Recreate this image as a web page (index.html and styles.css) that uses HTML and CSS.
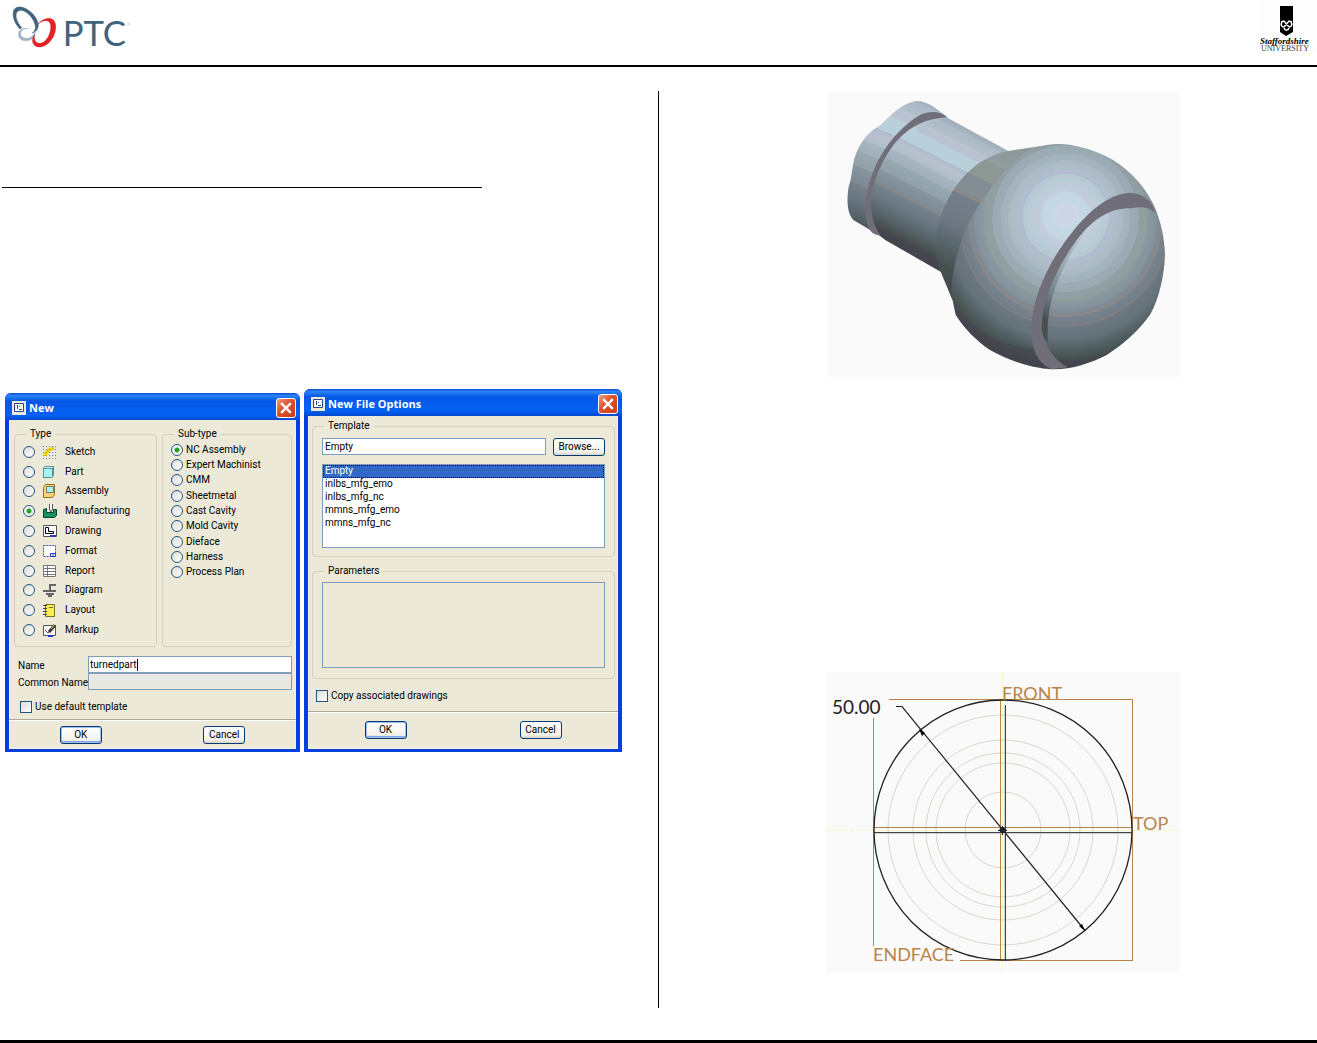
FILE: index.html
```html
<!DOCTYPE html>
<html lang="en">
<head>
<meta charset="utf-8">
<title>Turned part manufacturing</title>
<link rel="stylesheet" href="styles.css">
</head>
<body>
<header class="page-header">
  <svg class="logo-ptc" viewBox="0 0 420 195" role="img" aria-label="PTC">
    <path fill="#41637b" stroke="#41637b" stroke-width="2" fill-rule="evenodd" d="M97 99C128 88 114 52 88 33C67 16 43 17 40 36C37 54 48 75 60 87L65 83C51 68 43 47 51 36C60 25 78 31 93 50C108 70 112 89 97 99Z"/>
    <path fill="#9fb6ca" stroke="#9fb6ca" fill-rule="evenodd" d="M88 86C70 80 54 91 55 104C56 119 71 126 88 121C101 117 107 105 106 94C101 106 91 116 79 115C67 113 59 106 63 96C66 89 76 84 88 86Z"/>
    <path fill="#e02126" stroke="#e02126" fill-rule="evenodd" d="M113 73C128 55 149 49 160 60C174 73 167 105 151 124C136 142 112 147 102 134C94 124 98 110 104 103C101 119 107 131 121 130C136 128 148 110 151 91C155 73 149 62 138 62C128 62 120 67 113 73Z"/>
    <text x="188" y="137" class="ptc-word">PTC</text>
    <circle cx="386" cy="72" r="3" fill="none" stroke="#7d95a5"/>
  </svg>
  <svg class="logo-staffs" viewBox="0 0 70 65" role="img" aria-label="Staffordshire University">
    <path fill="#fdfdfd" d="M13 0h57v52H13z"/>
    <path d="M33 6h13v26l-7 4-6-4z"/>
    <path fill="none" stroke="#fff" stroke-width="1.500" d="M34 22l3-1 5 6M45 22l-3-1-5 6M35 22c-2 3 0 5 2 5M44 22c2 3 0 5-2 5M37 28c1 3 4 3 5 0"/>
    <text x="13" y="44" class="staffs-name">Staffordshire</text>
    <text x="14" y="51" class="staffs-sub">UNIVERSITY</text>
  </svg>
</header>

<main class="columns">
  <section class="column column-left">
    <hr class="rule">
    <div class="dialogs">
      <form class="dialog dialog-new">
        <div class="titlebar">
          <svg class="app-icon" viewBox="0 0 14 14"><path fill="#ece9d8" d="M0 0h14v14H0z"/><path fill="#fff" stroke="#27458c" d="M2.500 2.500h9v8h-9z"/><path stroke="#27458c" d="M5.500 4v4M7 5.500h1M7 8.500h3"/></svg>
          <h2>New</h2>
          <button type="button" class="close" aria-label="Close"><svg viewBox="0 0 10 10"><path d="M1 1l8 8M9 1L1 9"/></svg></button>
        </div>
        <div class="dialog-body">
          <div class="groups">
            <fieldset>
              <legend>Type</legend>
              <div class="type-list">
                <label><input type="radio" name="type"><svg viewBox="0 0 16 14"><path stroke="#6684c8" stroke-dasharray="1 2" d="M1 1.500h14M1 4.500h14M1 7.500h14M1 10.500h14M1 13.500h14"/><path fill="none" stroke="#e8c800" stroke-width="3" d="M3 11C4 6 7 4 12 3"/></svg>Sketch</label>
                <label><input type="radio" name="type"><svg viewBox="0 0 16 14"><path fill="#5a8f94" d="M1 3l2-2h9v9l-2 3H1z"/><path fill="#a5f3f5" d="M2 4h8v8H2z"/><path fill="#d9ffff" d="M3 2h8l-1 1H2z"/></svg>Part</label>
                <label><input type="radio" name="type"><svg viewBox="0 0 16 14"><path fill="#f7d56b" stroke="#94701c" d="M1.500 3.500l2-3h9v10l-2 3h-9z"/><path fill="#a5f3f5" stroke="#777" d="M4.500 2.500h7v6h-7z"/></svg>Assembly</label>
                <label><input type="radio" name="type" checked><svg viewBox="0 0 16 14"><path fill="#169260" stroke="#0a4430" d="M1.500 5.500l3-1v4h7v-3h3v6l-2 2h-11z"/><path fill="#fff" stroke="#555" d="M7.500 0v5l1.500 3 1.500-3V0"/></svg>Manufacturing</label>
                <label><input type="radio" name="type"><svg viewBox="0 0 16 14"><path fill="#fff" stroke="#555" d="M1.500 1.500h13v11h-13z"/><path fill="none" stroke="#000" d="M3.500 3.500h3v4h5v2h-8z"/><path stroke="#2338c8" stroke-width="2" d="M8 12h6"/></svg>Drawing</label>
                <label><input type="radio" name="type"><svg viewBox="0 0 16 14"><path fill="#fff" stroke="#444cbb" stroke-dasharray="2 1" d="M1.500 1.500h12v11h-12z"/><path fill="#fff" stroke="#2338c8" d="M8.500 9.500h5v3h-5zM11 10v3"/></svg>Format</label>
                <label><input type="radio" name="type"><svg viewBox="0 0 16 14"><path fill="#fff" stroke="#777" d="M1.500 1.500h12v11h-12z"/><path stroke="#777" d="M2 4.500h11M2 7.500h11M2 10.500h11M5.500 2v10"/></svg>Report</label>
                <label><input type="radio" name="type"><svg viewBox="0 0 16 14"><path fill="none" stroke="#666" stroke-width="2" d="M14 2H8v6M1 8h13M4 11h8M6 13h4"/></svg>Diagram</label>
                <label><input type="radio" name="type"><svg viewBox="0 0 16 14"><path fill="#f8ee54" stroke="#77701d" d="M3.500 1.500h9v12h-9z"/><path stroke="#444" d="M1 2.500h4M1 5.500h4M1 8.500h4M1 11.500h4"/><path stroke="#6c6c40" d="M7 4.500h4"/></svg>Layout</label>
                <label><input type="radio" name="type"><svg viewBox="0 0 16 14"><path fill="#fff" stroke="#555" d="M1.500 2.500h12v10h-12z"/><path fill="none" stroke="#c02626" d="M3 7l3 3 3-3"/><path stroke="#333" stroke-width="3" d="M7 9l6-7"/><path stroke="#e8d45a" d="M9 6l4-5"/><path stroke="#2338c8" stroke-width="2" d="M6 13h5"/></svg>Markup</label>
              </div>
            </fieldset>
            <fieldset>
              <legend>Sub-type</legend>
              <div class="subtype-list">
                <label><input type="radio" name="subtype" checked>NC Assembly</label>
                <label><input type="radio" name="subtype">Expert Machinist</label>
                <label><input type="radio" name="subtype">CMM</label>
                <label><input type="radio" name="subtype">Sheetmetal</label>
                <label><input type="radio" name="subtype">Cast Cavity</label>
                <label><input type="radio" name="subtype">Mold Cavity</label>
                <label><input type="radio" name="subtype">Dieface</label>
                <label><input type="radio" name="subtype">Harness</label>
                <label><input type="radio" name="subtype">Process Plan</label>
              </div>
            </fieldset>
          </div>
          <div class="names">
            <label for="part-name">Name</label>
            <div class="name-box"><input id="part-name" type="text" value="turnedpart"><span class="caret"></span></div>
            <label for="common-name">Common Name</label>
            <input id="common-name" class="field" type="text" disabled>
          </div>
          <label class="check"><input type="checkbox">Use default template</label>
        </div>
        <div class="actions">
          <button type="button" class="btn btn-default">OK</button>
          <button type="button" class="btn">Cancel</button>
        </div>
      </form>

      <form class="dialog dialog-options">
        <div class="titlebar">
          <svg class="app-icon" viewBox="0 0 14 14"><path fill="#ece9d8" d="M0 0h14v14H0z"/><path fill="#fff" stroke="#27458c" d="M2.500 2.500h9v8h-9z"/><path stroke="#27458c" d="M5.500 4v4M7 5.500h1M7 8.500h3"/></svg>
          <h2>New File Options</h2>
          <button type="button" class="close" aria-label="Close"><svg viewBox="0 0 10 10"><path d="M1 1l8 8M9 1L1 9"/></svg></button>
        </div>
        <div class="dialog-body">
          <fieldset>
            <legend>Template</legend>
            <div class="template-row">
              <input class="field" type="text" value="Empty" aria-label="Template">
              <button type="button" class="btn">Browse...</button>
            </div>
            <select class="template-list" size="5" aria-label="Templates">
              <option selected>Empty</option>
              <option>inlbs_mfg_emo</option>
              <option>inlbs_mfg_nc</option>
              <option>mmns_mfg_emo</option>
              <option>mmns_mfg_nc</option>
            </select>
          </fieldset>
          <fieldset>
            <legend>Parameters</legend>
            <div class="parameters"></div>
          </fieldset>
          <label class="check"><input type="checkbox">Copy associated drawings</label>
        </div>
        <div class="actions">
          <button type="button" class="btn btn-default">OK</button>
          <button type="button" class="btn">Cancel</button>
        </div>
      </form>
    </div>
  </section>

  <section class="column column-right">
    <svg class="model" viewBox="21 18 1059 858" role="img" aria-label="Turned part model">
      <defs>
        <linearGradient id="neck" gradientUnits="userSpaceOnUse" x1="440" y1="120" x2="255" y2="452">
          <stop offset="0" stop-color="#7f8b92"/><stop offset=".06" stop-color="#8f9da4"/>
          <stop offset=".06" stop-color="#9eacb6"/><stop offset=".12" stop-color="#a5b2bf"/>
          <stop offset=".12" stop-color="#acbac8"/><stop offset=".19" stop-color="#b0bfc9"/>
          <stop offset=".19" stop-color="#b9c2d0"/><stop offset=".25" stop-color="#b9c2d0"/>
          <stop offset=".25" stop-color="#b9cfd9"/><stop offset=".34" stop-color="#b9cfd9"/>
          <stop offset=".34" stop-color="#aebbd0"/><stop offset=".38" stop-color="#b8c2cd"/>
          <stop offset=".43" stop-color="#b0bdca"/><stop offset=".43" stop-color="#a6b7c1"/>
          <stop offset=".5" stop-color="#a0aebb"/><stop offset=".5" stop-color="#97a8ae"/>
          <stop offset=".58" stop-color="#92a0aa"/><stop offset=".58" stop-color="#88969e"/>
          <stop offset=".66" stop-color="#7d8b96"/><stop offset=".67" stop-color="#8b8785"/>
          <stop offset=".68" stop-color="#74808a"/><stop offset=".76" stop-color="#69757f"/>
          <stop offset=".84" stop-color="#56636a"/><stop offset=".91" stop-color="#46514f"/>
          <stop offset=".93" stop-color="#46464f"/><stop offset="1" stop-color="#43434d"/>
        </linearGradient>
        <linearGradient id="neck-side" href="#neck" x1="450" y1="90" x2="240" y2="500"/>
        <linearGradient id="cap" href="#neck" x1="330" y1="0" x2="125" y2="490"/>
        <linearGradient id="shoulder" gradientUnits="userSpaceOnUse" x1="590" y1="190" x2="380" y2="620">
          <stop offset="0" stop-color="#8a9698"/><stop offset=".15" stop-color="#929d9c"/>
          <stop offset=".15" stop-color="#8d9894"/><stop offset=".27" stop-color="#8d9894"/>
          <stop offset=".27" stop-color="#828d94"/><stop offset=".39" stop-color="#828d94"/>
          <stop offset=".39" stop-color="#8b8785"/><stop offset=".41" stop-color="#8b8785"/>
          <stop offset=".41" stop-color="#747f8a"/><stop offset=".6" stop-color="#6d7882"/>
          <stop offset=".72" stop-color="#59656d"/><stop offset=".86" stop-color="#46514f"/>
          <stop offset="1" stop-color="#43474d"/>
        </linearGradient>
        <linearGradient id="step" gradientUnits="userSpaceOnUse" x1="780" y1="450" x2="670" y2="750">
          <stop offset="0" stop-color="#b4c4cf"/><stop offset=".3" stop-color="#9caab4"/>
          <stop offset=".6" stop-color="#76828c"/><stop offset=".85" stop-color="#46514f"/>
        </linearGradient>
        <radialGradient id="ball" gradientUnits="userSpaceOnUse" cx="735" cy="413" r="430" fx="738" fy="388">
          <stop offset="0" stop-color="#ccd5e9"/><stop offset=".09" stop-color="#cdd7e5"/>
          <stop offset=".09" stop-color="#c4d9e4"/><stop offset=".17" stop-color="#c4d6e1"/>
          <stop offset=".17" stop-color="#c3cddb"/><stop offset=".24" stop-color="#bdcbd9"/>
          <stop offset=".24" stop-color="#b9ced8"/><stop offset=".3" stop-color="#b6c8d2"/>
          <stop offset=".3" stop-color="#aebbd0"/><stop offset=".33" stop-color="#b3bdcf"/>
          <stop offset=".33" stop-color="#afbfca"/><stop offset=".4" stop-color="#abb9c5"/>
          <stop offset=".4" stop-color="#a2b6bc"/><stop offset=".45" stop-color="#a4b1bf"/>
          <stop offset=".45" stop-color="#9dabb7"/><stop offset=".51" stop-color="#9aaab0"/>
          <stop offset=".51" stop-color="#919fa7"/><stop offset=".57" stop-color="#929e9d"/>
          <stop offset=".57" stop-color="#899aa0"/><stop offset=".63" stop-color="#85929c"/>
          <stop offset=".65" stop-color="#7d8993"/><stop offset=".67" stop-color="#8d8988"/>
          <stop offset=".68" stop-color="#77838e"/><stop offset=".73" stop-color="#727d87"/>
          <stop offset=".735" stop-color="#85817f"/><stop offset=".745" stop-color="#6c7781"/>
          <stop offset=".82" stop-color="#64727a"/><stop offset=".88" stop-color="#556267"/>
          <stop offset=".95" stop-color="#45524f"/><stop offset=".97" stop-color="#46464f"/>
          <stop offset="1" stop-color="#43434d"/>
        </radialGradient>
      </defs>
      <path fill="#fafafa" d="M21 18h1059v858H21z"/>
      <path fill="url(#cap)" d="M290 48C324 48 350 72 382 96L300 200L200 440L176 450L100 405C82 385 79 348 86 305C96 277 95 252 104 218C117 175 145 139 182 120C215 86 251 53 290 48Z"/>
      <path fill="url(#neck-side)" d="M382 98L565 198L600 300L440 580L362 560L197 466L176 450C152 415 146 370 154 330C172 230 260 115 382 98Z"/>
      <path fill="#706e79" d="M382 97C360 77 326 76 296 92C247 121 197 178 168 239C141 300 127 367 142 419C150 442 164 451 181 451C163 424 150 390 154 340C158 290 190 214 231 167C274 121 321 100 382 97Z"/>
      <path fill="url(#shoulder)" d="M565 198L660 184L560 400L430 700L395 640L362 560C342 517 343 444 367 381C398 299 465 216 565 198Z"/>
      <path fill="url(#ball)" d="M640 188Q680 178 715 177C759 176 816 193 862 216C910 239 960 287 987 334C1019 385 1034 457 1035 510C1033 568 1018 640 991 688C957 737 910 779 860 810C810 835 755 854 697 853C630 849 564 825 510 795C469 767 431 729 407 689L394 628C394 552 425 430 484 350C526 289 580 215 640 188Z"/>
      <path fill="#46464f" opacity=".6" d="M398 660C470 757 570 785 645 790L648 846C585 835 502 796 455 745Z"/>
      <path fill="url(#step)" d="M795 440C735 525 692 620 685 700Q681 740 684 773L655 740L650 640L740 460Z"/>
      <path fill="#706e79" d="M1006 386C1000 350 973 326 930 323C861 327 801 385 753 446C687 529 638 633 634 726C632 790 650 832 694 853L743 847C705 827 673 785 666 735C661 651 710 548 770 465C823 397 873 369 934 370C965 363 991 367 1006 386Z"/>
    </svg>
    <svg class="sketch" viewBox="0 0 354 301" role="img" aria-label="End face sketch, diameter 50.00">
      <path fill="#fafafa" d="M0 0h354v301H0z"/>
      <path stroke="#f7f7bb" stroke-dasharray="4 2" d="M176.500 0v301M0 158.500h354"/>
      <g fill="none" stroke="#d8d8d0">
        <circle cx="177" cy="158" r="115"/><circle cx="177" cy="158" r="90"/><circle cx="177" cy="158" r="77"/><circle cx="177" cy="158" r="67"/><circle cx="177" cy="158" r="38"/>
      </g>
      <path class="frame" fill="none" stroke="#b98548" d="M47.500 46v228M63 27.500h243.500v261H134M174.500 28v260M48 155.500h258"/>
      <path stroke="#444" d="M179.500 33v255M48 160.500h258"/>
      <path stroke="#aaa" d="M178.500 33v255M48 161.500h258" opacity=".5"/>
      <ellipse cx="177" cy="158" rx="129" ry="130" fill="none" stroke="#222" stroke-width="1.300"/>
      <path fill="none" stroke="#222" stroke-width="1.200" d="M70 34.500h6L259 258.500"/>
      <path d="M93 57l6 4-3 3zM259 259l-6-5 3-2z"/>
      <circle cx="176.500" cy="158" r="3" fill="#1b2430"/><path stroke="#222" d="M172 158.500h9M176.500 154v9"/>
      <g class="datum"><text x="176" y="28">FRONT</text><text x="307" y="158">TOP</text><text x="47" y="289">ENDFACE</text></g>
      <text x="6" y="42" class="dimension">50.00</text>
    </svg>
  </section>
</main>
</body>
</html>
```
FILE: styles.css
```css
* { box-sizing: border-box; }

body {
  margin: 0;
  background: #fff;
  color: #000;
  font: 10px/12px Roboto, "Liberation Sans", sans-serif;
  border-bottom: 3px solid #000;
}

svg { display: block; flex: none; }

.page-header {
  display: flex;
  justify-content: space-between;
  border-bottom: 2px solid #000;
}
.logo-ptc { width: 140px; height: 65px; }
.logo-staffs { width: 70px; height: 65px; }
.ptc-word { font: 104px Lato, sans-serif; fill: #41637b; }
.staffs-name { font: italic bold 9px "Liberation Serif", serif; }
.staffs-sub { font: 8px "Liberation Serif", serif; fill: #444; }

.columns {
  display: grid;
  grid-template-columns: 1fr 1fr;
  padding: 24px 0 32px;
}
.column-left { border-right: 1px solid #000; }
.column-right {
  display: flex;
  flex-direction: column;
  align-items: center;
  gap: 295px;
  padding: 0 0 35px 31px;
}
.model { width: 353px; height: 286px; }
.sketch { width: 354px; height: 301px; }
.frame { shape-rendering: crispEdges; }
.datum { font: 18px Lato, sans-serif; fill: #b98548; }
.dimension { font: 19px Lato, sans-serif; fill: #222; }

.rule {
  width: 73%;
  height: 1px;
  margin: 96px 0 201px 2px;
  border: 0;
  background: #000;
}

.dialogs {
  display: flex;
  align-items: flex-end;
  gap: 4px;
  padding-left: 5px;
}
.dialog {
  border: solid #0540dc;
  border-width: 0 4px 3px;
  border-radius: 6px 6px 0 0;
  background: #ece9d8;
  box-shadow: inset 0 0 0 1px #f4f1e2;
}
.dialog-new { width: 295px; }
.dialog-options { width: 318px; }

.titlebar {
  display: flex;
  align-items: center;
  gap: 3px;
  height: 27px;
  margin: 0 -4px;
  padding: 3px 4px 0 7px;
  border-radius: 6px 6px 0 0;
  background: linear-gradient(#0a4bd0, #2b83f6 10%, #0557e4 30%, #0561f5 80%, #0348d0);
}
.titlebar h2 {
  flex: 1;
  margin: 0;
  color: #fff;
  font: bold 11px/14px "Open Sans", sans-serif;
}
.app-icon { width: 14px; height: 14px; }
.close {
  display: grid;
  place-items: center;
  width: 20px;
  height: 20px;
  padding: 0;
  border: 1px solid #fff;
  border-radius: 3px;
  background: linear-gradient(135deg, #f09a80, #e0502c 45%, #c83a14);
}
.close svg { width: 12px; height: 12px; stroke: #fff; stroke-width: 2; }

fieldset {
  min-width: 0;
  margin: 0;
  padding: 0 9px 8px;
  border: 1px solid #d3d0bd;
  border-radius: 4px;
}
legend { margin-left: 2px; padding: 0 4px; line-height: 12px; }
label { display: flex; align-items: center; }

.dialog-body { padding: 4px 3px 0 4px; }
.dialog-new .dialog-body { padding: 8px 4px 0 5px; }

.groups {
  display: grid;
  grid-template-columns: 143px 1fr;
  gap: 5px;
}
.groups fieldset { padding: 0 7px 6px 8px; }
.groups legend { margin-left: 3px; }
.type-list, .subtype-list { display: grid; grid-auto-rows: 1fr; }
.type-list { height: 200px; padding-top: 2px; }
.type-list label { gap: 7px; }
.type-list svg { width: 16px; height: 14px; }
.subtype-list { height: 140px; padding-top: 2px; }
.subtype-list label { gap: 3px; }

input[type="radio"], input[type="checkbox"] {
  appearance: none;
  flex: none;
  width: 12px;
  height: 12px;
  margin: 0;
  border: 1px solid #1f5482;
  background: linear-gradient(135deg, #dcdcd7, #fff);
}
input[type="radio"] { border-radius: 50%; }
input[type="radio"]:checked {
  background: radial-gradient(circle, #21a121 0 2px, #f6f6f3 3px);
}

input[type="text"] {
  min-width: 0;
  height: 17px;
  margin: 0;
  padding: 0 2px;
  border: 1px solid #7f9db9;
  background: #fff;
  color: #000;
  font: inherit;
}
input[type="text"]:disabled { background: #e9e9e4; }

.names {
  display: grid;
  grid-template-columns: 70px 1fr;
  margin-top: 9px;
  padding-left: 4px;
}
.names label { padding-top: 2px; white-space: nowrap; }
.name-box {
  display: flex;
  align-items: center;
  border: 1px solid #7f9db9;
  background: #fff;
  height: 17px;
}
.name-box input[type="text"] {
  field-sizing: content;
  height: 15px;
  padding: 0 0 0 1px;
  border: 0;
}
.caret { width: 1px; height: 12px; background: #000; }

.check { gap: 3px; margin: 11px 0 6px 6px; }
.dialog-options .check { margin: 11px 0 9px 4px; }

.actions {
  display: grid;
  grid-template-columns: 1fr 1fr;
  justify-items: center;
  padding: 6px 0 5px;
  border-top: 1px solid #aca899;
  box-shadow: inset 0 1px #fff;
}
.dialog-options .actions { padding: 9px 0 10px; }

.btn {
  width: 42px;
  height: 18px;
  padding: 0;
  border: 1px solid #003c74;
  border-radius: 3px;
  background: linear-gradient(#fff, #f3f2ec 80%, #d8d2c5);
  color: #000;
  font: inherit;
}
.btn-default { box-shadow: inset 0 0 0 1px #9fbcf0, inset 0 -2px #86a6e6; }

.template-row {
  display: flex;
  gap: 7px;
  padding: 6px 0 8px;
}
.template-row .field { flex: 1; }
.template-row .btn { width: 52px; }

.template-list {
  display: block;
  width: 100%;
  height: 84px;
  margin: 0;
  padding: 0;
  border: 1px solid #7f9db9;
  border-radius: 0;
  outline: 0;
  background: #fff;
  color: #000;
  font: inherit;
  overflow: hidden;
}
.template-list option { height: 13px; min-height: 13px; padding: 0 2px; }
.template-list option:checked {
  background: linear-gradient(#316ac5, #316ac5);
  -webkit-text-fill-color: #fff;
  outline: 1px dotted #111;
  outline-offset: -1px;
}

.dialog-options fieldset + fieldset { margin-top: 8px; }
.parameters {
  height: 86px;
  margin: 5px 0 2px;
  border: 1px solid #7f9db9;
}
```
